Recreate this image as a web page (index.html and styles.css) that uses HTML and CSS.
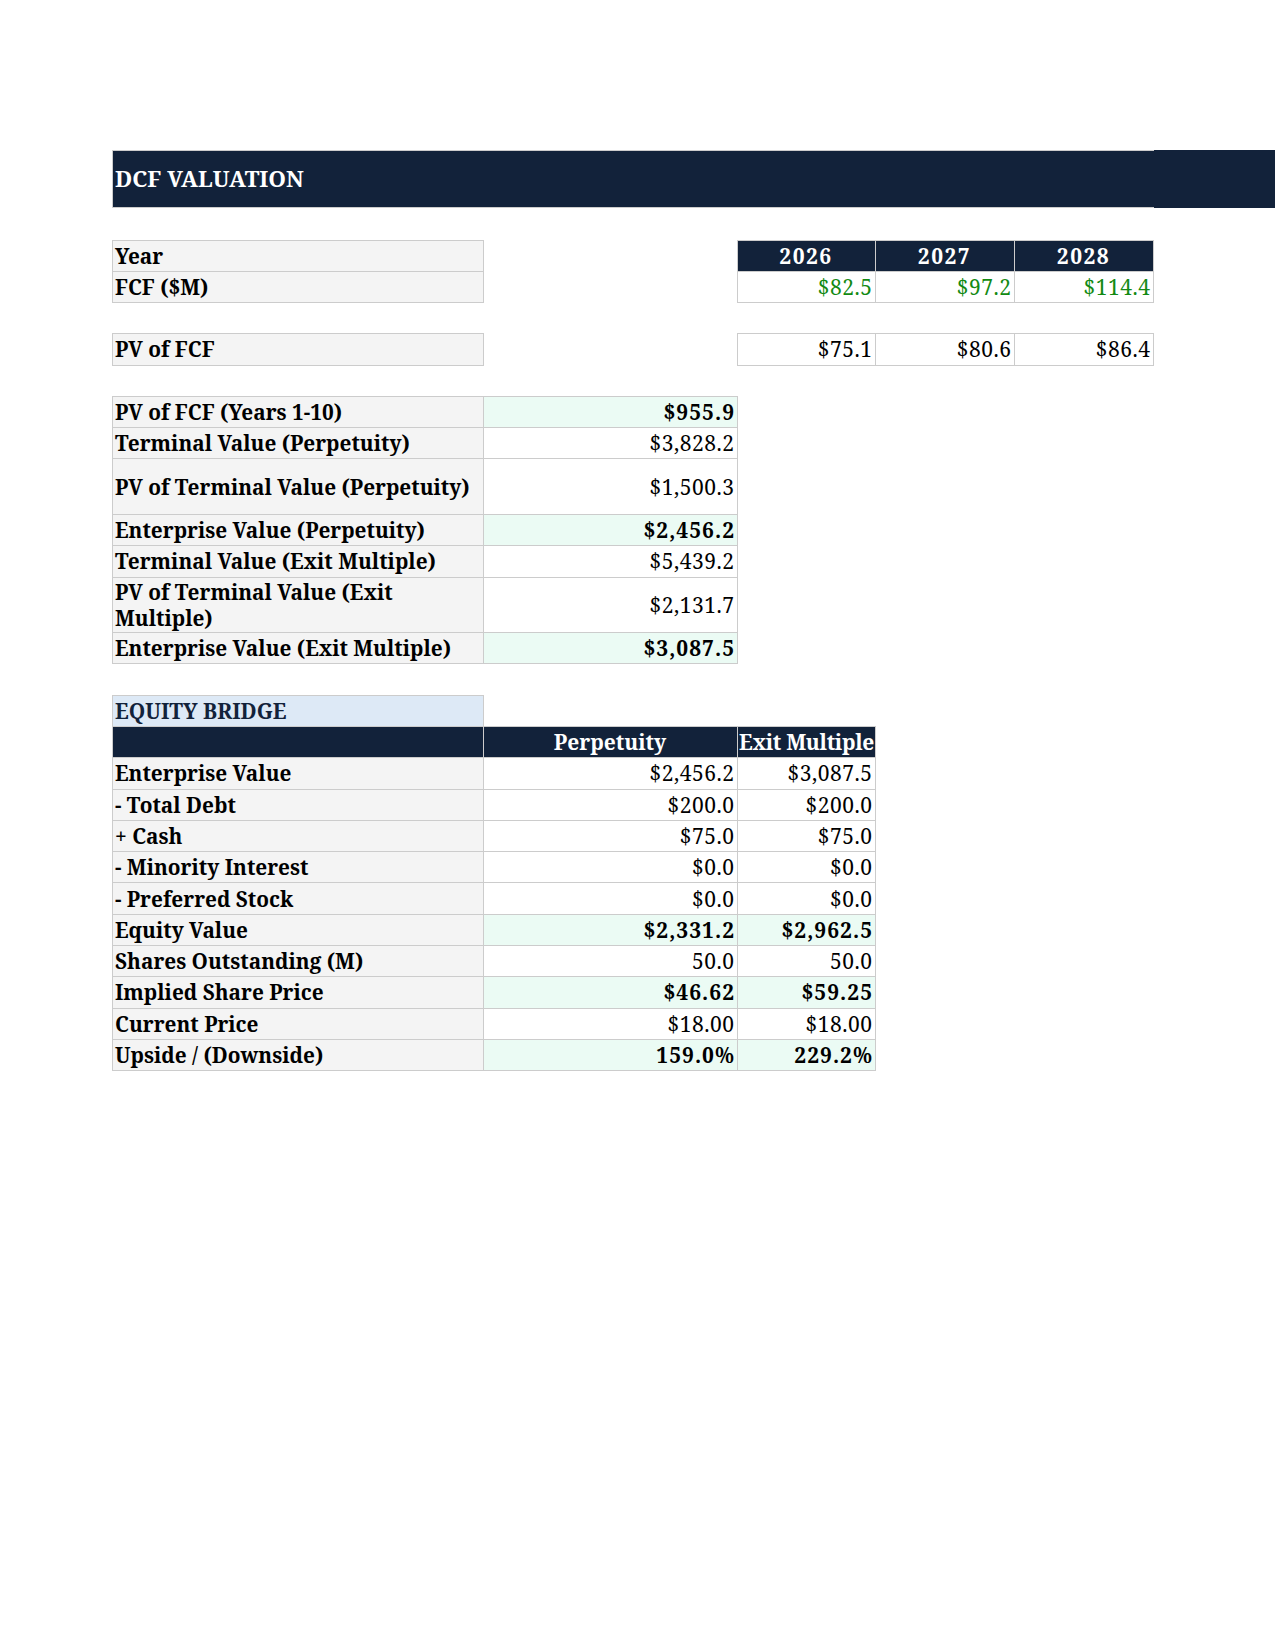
FILE: index.html
```
<!DOCTYPE html>
<html>
<head>
<meta charset="utf-8">
<title>DCF Valuation</title>
<link rel="stylesheet" href="styles.css">
</head>
<body>
<div class="page">
<table class="sheet">
<colgroup>
<col class="ca"><col class="cb"><col class="cc"><col class="cd"><col class="ce"><col class="cf">
</colgroup>
<tbody>
<tr class="h57"><td class="title" colspan="5">DCF VALUATION</td><td class="title-ext"></td></tr>
<tr class="h32"><td colspan="6"></td></tr>
<tr><td class="lbl">Year</td><td></td><td class="yr year">2026</td><td class="yr year">2027</td><td class="yr year">2028</td><td></td></tr>
<tr><td class="lbl">FCF ($M)</td><td></td><td class="num green">$82.5</td><td class="num green">$97.2</td><td class="num green">$114.4</td><td></td></tr>
<tr class="h30"><td colspan="6"></td></tr>
<tr><td class="lbl">PV of FCF</td><td></td><td class="num">$75.1</td><td class="num">$80.6</td><td class="num">$86.4</td><td></td></tr>
<tr class="h30"><td colspan="6"></td></tr>
<tr><td class="lbl">PV of FCF (Years 1-10)</td><td class="num hi">$955.9</td><td colspan="4"></td></tr>
<tr><td class="lbl">Terminal Value (Perpetuity)</td><td class="num">$3,828.2</td><td colspan="4"></td></tr>
<tr class="h55"><td class="lbl">PV of Terminal Value (Perpetuity)</td><td class="num">$1,500.3</td><td colspan="4"></td></tr>
<tr><td class="lbl">Enterprise Value (Perpetuity)</td><td class="num hi">$2,456.2</td><td colspan="4"></td></tr>
<tr><td class="lbl">Terminal Value (Exit Multiple)</td><td class="num">$5,439.2</td><td colspan="4"></td></tr>
<tr class="h55"><td class="lbl wrap">PV of Terminal Value (Exit Multiple)</td><td class="num">$2,131.7</td><td colspan="4"></td></tr>
<tr><td class="lbl">Enterprise Value (Exit Multiple)</td><td class="num hi">$3,087.5</td><td colspan="4"></td></tr>
<tr class="h30"><td colspan="6"></td></tr>
<tr><td class="section">EQUITY BRIDGE</td><td colspan="5"></td></tr>
<tr><td class="yr"></td><td class="yr">Perpetuity</td><td class="yr tight">Exit Multiple</td><td colspan="3"></td></tr>
<tr><td class="lbl">Enterprise Value</td><td class="num">$2,456.2</td><td class="num">$3,087.5</td><td colspan="3"></td></tr>
<tr><td class="lbl">- Total Debt</td><td class="num">$200.0</td><td class="num">$200.0</td><td colspan="3"></td></tr>
<tr><td class="lbl">+ Cash</td><td class="num">$75.0</td><td class="num">$75.0</td><td colspan="3"></td></tr>
<tr><td class="lbl">- Minority Interest</td><td class="num">$0.0</td><td class="num">$0.0</td><td colspan="3"></td></tr>
<tr><td class="lbl">- Preferred Stock</td><td class="num">$0.0</td><td class="num">$0.0</td><td colspan="3"></td></tr>
<tr><td class="lbl">Equity Value</td><td class="num hi">$2,331.2</td><td class="num hi">$2,962.5</td><td colspan="3"></td></tr>
<tr><td class="lbl">Shares Outstanding (M)</td><td class="num">50.0</td><td class="num">50.0</td><td colspan="3"></td></tr>
<tr><td class="lbl">Implied Share Price</td><td class="num hi">$46.62</td><td class="num hi">$59.25</td><td colspan="3"></td></tr>
<tr><td class="lbl">Current Price</td><td class="num">$18.00</td><td class="num">$18.00</td><td colspan="3"></td></tr>
<tr><td class="lbl">Upside / (Downside)</td><td class="num hi">159.0%</td><td class="num hi">229.2%</td><td colspan="3"></td></tr>
</tbody>
</table>
</div>
</body>
</html>
```
FILE: styles.css
```
html {
  overflow: hidden;
}
body {
  margin: 0;
  background: #ffffff;
  font-family: "Noto Serif", "DejaVu Serif", "Liberation Serif", serif;
  color: #000000;
}
.page {
  padding: 150px 0 0 112px;
}
.sheet {
  border-collapse: collapse;
  table-layout: fixed;
  width: 1163px;
}
.ca { width: 371px; }
.cb { width: 254px; }
.cc { width: 138px; }
.cd { width: 139px; }
.ce { width: 139px; }
.cf { width: 122px; }
.sheet td {
  height: 30.3px;
  padding: 0 3px 0 2px;
  font-size: 21px;
  line-height: 26px;
  vertical-align: middle;
  white-space: nowrap;
  overflow: hidden;
}
.sheet tr.h57 td { height: 56px; }
.sheet tr.h32 td { height: 31.5px; }
.sheet tr.h30 td { height: 30.2px; }
.sheet tr.h55 td { height: 54.6px; }
.title {
  background: #12223a;
  color: #ffffff;
  font-weight: 700;
  border-top: 1px solid #cccccc;
  border-bottom: 1px solid #cccccc;
  border-left: 1px solid #cccccc;
}
.sheet td.title {
  font-size: 22.5px;
}
.title-ext {
  background: #12223a;
  border-top: 1px solid #12223a;
  border-bottom: 1px solid #12223a;
}
.lbl {
  background: #f4f4f4;
  border: 1px solid #cccccc;
  font-weight: 700;
  text-align: left;
}
.sheet td.lbl {
  font-size: 20.8px;
}
.sheet td.wrap {
  white-space: normal;
}
.num {
  background: #ffffff;
  border: 1px solid #cccccc;
  text-align: right;
  letter-spacing: 0.5px;
}
.sheet td.num {
  padding-right: 2.5px;
}
.hi {
  background: #ebfbf4;
  font-weight: 700;
  letter-spacing: 1px;
}
.sheet td.hi {
  padding-right: 2px;
}
.green {
  color: #138a13;
}
.yr {
  background: #12223a;
  color: #ffffff;
  font-weight: 700;
  text-align: center;
  border: 1px solid #cccccc;
}
.year {
  letter-spacing: 1.5px;
}
.sheet td.tight {
  padding: 0;
  letter-spacing: -0.3px;
}
.section {
  background: #dde9f6;
  color: #12223a;
  font-weight: 700;
  border: 1px solid #cccccc;
}
```
